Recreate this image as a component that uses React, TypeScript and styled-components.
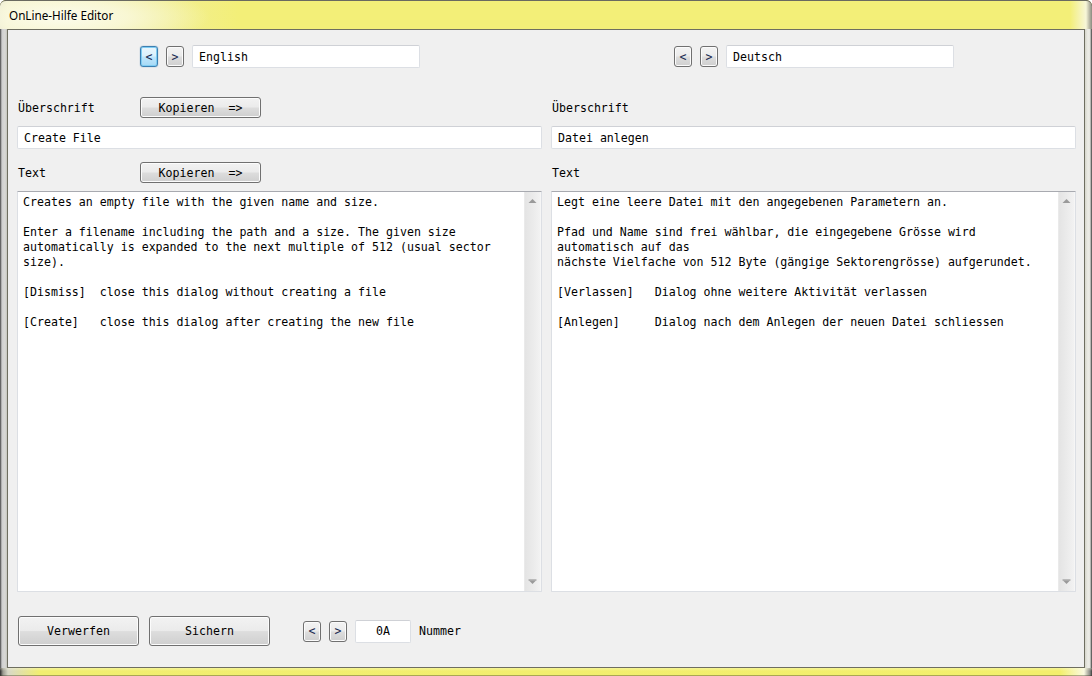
import React from "react";
import styled, { createGlobalStyle, css } from "styled-components";

const Global = createGlobalStyle`
  html, body { margin: 0; padding: 0; background: #ffffff; }
  body { width: 1092px; height: 676px; overflow: hidden; }
  * { box-sizing: border-box; }
`;

const mono = `"DejaVu Sans Mono", "Liberation Mono", monospace`;

const Window = styled.div`
  width: 1092px;
  height: 676px;
  display: flex;
  flex-direction: column;
  background: #f3ef78;
  border-radius: 6px 6px 0 0;
  box-shadow: inset 0 0 0 1px #5a5a4a;
  overflow: hidden;
`;

const TitleBar = styled.div`
  height: 29px;
  flex: none;
  display: flex;
  align-items: center;
  padding-left: 9px;
  background:
    radial-gradient(ellipse 150px 34px at 60px 16px, rgba(252, 252, 236, 1) 0%, rgba(250, 249, 220, 0.85) 45%, rgba(243, 239, 120, 0) 100%),
    linear-gradient(to right, #d8d8cc 0px, #eeeccc 8px, #f3ef78 240px, #f3ef78 1070px, #f7f6d8 1086px, #8a8a80 1092px);
  border-radius: 6px 6px 0 0;
  border-top: 1px solid #6a6a60;
`;

const Title = styled.span`
  font-family: "Noto Sans", "Open Sans", sans-serif;
  font-size: 11.7px;
  color: #000;
`;

const Body = styled.div`
  flex: 1;
  display: flex;
  min-height: 0;
`;

const SideFrame = styled.div<{ $side: "left" | "right" }>`
  flex: none;
  width: 7px;
  ${(p) =>
    p.$side === "left"
      ? css`
          background: linear-gradient(to right, #3e3e3e 0px, #8e8e8e 1px, #cfcfcf 2px, #d9d9d6 5px, #c4c4bc 7px);
        `
      : css`
          background: linear-gradient(to right, #d6d6cc 0px, #ecece6 3px, #e6e6e0 5px, #8a8a86 6px, #3e3e3e 7px);
        `}
`;

const Client = styled.div`
  flex: 1;
  display: flex;
  flex-direction: column;
  background: #f0f0f0;
  border: 1px solid #6e6e60;
  padding: 15px 8px 0 9px;
`;

const Columns = styled.div`
  display: grid;
  grid-template-columns: 525px 525px;
  column-gap: 9px;
`;

const Pane = styled.div`
  display: flex;
  flex-direction: column;
  min-width: 0;
`;

const NavRow = styled.div`
  height: 23px;
  display: flex;
  align-items: center;
  gap: 8px;
  padding-left: 123px;
`;

const NavButton = styled.button<{ $focused?: boolean }>`
  width: 18px;
  height: 21px;
  padding: 0;
  margin: 0;
  display: flex;
  align-items: center;
  justify-content: center;
  font-family: ${mono};
  font-size: 11.6px;
  color: #1a2a50;
  border: 1px solid #707070;
  border-radius: 3px;
  background: linear-gradient(#f3f3f3 0%, #ebebeb 48%, #dddddd 52%, #cfcfcf 100%);
  box-shadow: inset 0 0 0 1px #fbfbfb;
  ${(p) =>
    p.$focused &&
    css`
      border-color: #3c7fb1;
      background: linear-gradient(#eaf6fd 0%, #d9f0fc 48%, #bee6fd 52%, #a7d9f5 100%);
      box-shadow: inset 0 0 0 1px #7fcdf3, 0 0 1px #3c7fb1;
    `}
`;

const TextBox = styled.div<{ $w?: number; $center?: boolean }>`
  height: 23px;
  ${(p) => (p.$w ? `width: ${p.$w}px;` : "")}
  display: flex;
  align-items: center;
  justify-content: ${(p) => (p.$center ? "center" : "flex-start")};
  padding: 0 6px;
  background: #ffffff;
  border: 1px solid #dcdfe4;
  border-top-color: #cfd1d6;
  border-radius: 2px;
  font-family: ${mono};
  font-size: 11.6px;
  color: #000;
  white-space: pre;
`;

const LabelRow = styled.div<{ $mt: number }>`
  height: 21px;
  margin-top: ${(p) => p.$mt}px;
  display: flex;
  align-items: center;
`;

const Label = styled.span<{ $w?: number }>`
  ${(p) => (p.$w ? `width: ${p.$w}px; padding-left: 1px;` : "")}
  flex: none;
  font-family: ${mono};
  font-size: 11.6px;
  color: #000;
  white-space: pre;
`;

const PushButton = styled.button<{ $w: number; $h: number }>`
  width: ${(p) => p.$w}px;
  height: ${(p) => p.$h}px;
  padding: 0;
  margin: 0;
  font-family: ${mono};
  font-size: 11.6px;
  color: #000;
  white-space: pre;
  border: 1px solid #707070;
  border-radius: 3px;
  background: linear-gradient(#f2f2f2 0%, #ebebeb 48%, #dddddd 52%, #cfcfcf 100%);
  box-shadow: inset 0 0 0 1px #fcfcfc;
`;

const Field = styled(TextBox)`
  margin-top: 8px;
`;

const TextArea = styled.div`
  margin-top: 8px;
  height: 401px;
  display: flex;
  background: #ffffff;
  border: 1px solid #dcdfe4;
  border-top-color: #a8aab0;
  border-radius: 1px;
`;

const TextContent = styled.div`
  flex: 1;
  min-width: 0;
  padding: 3px 5px;
  font-family: ${mono};
  font-size: 11.6px;
  line-height: 15px;
  color: #000;
  white-space: pre;
  overflow: hidden;
`;

const ScrollBar = styled.div`
  width: 17px;
  flex: none;
  display: flex;
  flex-direction: column;
  background: linear-gradient(to right, #e4e4e4 0%, #ececec 60%, #f2f2f2 100%);
  border-left: 1px solid #eaeaea;
  border-right: 1px solid #f6f6f6;
`;

const ArrowCell = styled.div`
  height: 18px;
  display: flex;
  align-items: center;
  justify-content: center;
`;

const Track = styled.div`
  flex: 1;
`;

const Footer = styled.div`
  margin-top: 24px;
  margin-left: 1px;
  display: flex;
  align-items: center;
`;

const FooterGap = styled.div<{ $w: number }>`
  width: ${(p) => p.$w}px;
  flex: none;
`;

const NavGroup = styled.div`
  display: flex;
  align-items: center;
  gap: 8px;
`;

const Arrow = ({ dir }: { dir: "up" | "down" }) => (
  <svg width="9" height="6" viewBox="0 0 9 6">
    {dir === "up" ? (
      <path d="M0.5 5 L4.5 1 L8.5 5 Z" fill="#9a9a9a" />
    ) : (
      <>
        <rect x="0.5" y="0.5" width="8" height="1" fill="#8a8a8a" />
        <path d="M1 1.5 L4.5 5 L8 1.5 Z" fill="#9a9a9a" />
      </>
    )}
  </svg>
);

const Memo = ({ text }: { text: string }) => (
  <TextArea>
    <TextContent>{text}</TextContent>
    <ScrollBar>
      <ArrowCell>
        <Arrow dir="up" />
      </ArrowCell>
      <Track />
      <ArrowCell>
        <Arrow dir="down" />
      </ArrowCell>
    </ScrollBar>
  </TextArea>
);

const englishText = `Creates an empty file with the given name and size.

Enter a filename including the path and a size. The given size
automatically is expanded to the next multiple of 512 (usual sector
size).

[Dismiss]  close this dialog without creating a file

[Create]   close this dialog after creating the new file`;

const germanText = `Legt eine leere Datei mit den angegebenen Parametern an.

Pfad und Name sind frei wählbar, die eingegebene Grösse wird
automatisch auf das
nächste Vielfache von 512 Byte (gängige Sektorengrösse) aufgerundet.

[Verlassen]   Dialog ohne weitere Aktivität verlassen

[Anlegen]     Dialog nach dem Anlegen der neuen Datei schliessen`;

type PaneProps = {
  lang: string;
  heading: string;
  text: string;
  withCopy?: boolean;
  focused?: boolean;
};

const LanguagePane = ({ lang, heading, text, withCopy, focused }: PaneProps) => (
  <Pane>
    <NavRow>
      <NavButton $focused={focused}>&lt;</NavButton>
      <NavButton>&gt;</NavButton>
      <TextBox $w={228}>{lang}</TextBox>
    </NavRow>
    <LabelRow $mt={29}>
      <Label $w={123}>Überschrift</Label>
      {withCopy && <PushButton $w={121} $h={21}>{"Kopieren  =>"}</PushButton>}
    </LabelRow>
    <Field>{heading}</Field>
    <LabelRow $mt={13}>
      <Label $w={123}>Text</Label>
      {withCopy && <PushButton $w={121} $h={21}>{"Kopieren  =>"}</PushButton>}
    </LabelRow>
    <Memo text={text} />
  </Pane>
);

const BottomFrame = styled.div`
  height: 8px;
  flex: none;
  background:
    linear-gradient(to bottom, rgba(255, 255, 230, 0.35) 0px, rgba(255, 255, 230, 0) 3px, rgba(0, 0, 0, 0) 7px, rgba(60, 60, 40, 0.8) 8px),
    linear-gradient(to right, #2a2a2a 0px, #9a9a90 3px, #d8d8c8 8px, #f1ee70 40px, #f3ef6c 1060px, #fafae0 1084px, #8a8a86 1090px, #3a3a3a 1092px);
`;

export default function App() {
  return (
    <>
      <Global />
      <Window>
        <TitleBar>
          <Title>OnLine-Hilfe Editor</Title>
        </TitleBar>
        <Body>
          <SideFrame $side="left" />
          <Client>
            <Columns>
              <LanguagePane lang="English" heading="Create File" text={englishText} withCopy focused />
              <LanguagePane lang="Deutsch" heading="Datei anlegen" text={germanText} />
            </Columns>
            <Footer>
              <PushButton $w={121} $h={30}>Verwerfen</PushButton>
              <FooterGap $w={10} />
              <PushButton $w={121} $h={30}>Sichern</PushButton>
              <FooterGap $w={33} />
              <NavGroup>
                <NavButton>&lt;</NavButton>
                <NavButton>&gt;</NavButton>
                <TextBox $w={56} $center>0A</TextBox>
              </NavGroup>
              <FooterGap $w={8} />
              <Label>Nummer</Label>
            </Footer>
          </Client>
          <SideFrame $side="right" />
        </Body>
        <BottomFrame />
      </Window>
    </>
  );
}
